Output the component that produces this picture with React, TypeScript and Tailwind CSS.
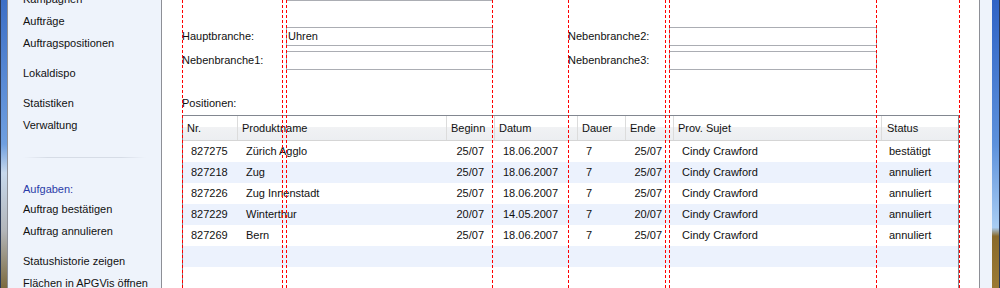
import React from 'react';

type Row = {
  nr: string;
  name: string;
  beginn: string;
  datum: string;
  dauer: string;
  ende: string;
  sujet: string;
  status: string;
};

const rows: Row[] = [
  { nr: '827275', name: 'Zürich Agglo', beginn: '25/07', datum: '18.06.2007', dauer: '7', ende: '25/07', sujet: 'Cindy Crawford', status: 'bestätigt' },
  { nr: '827218', name: 'Zug', beginn: '25/07', datum: '18.06.2007', dauer: '7', ende: '25/07', sujet: 'Cindy Crawford', status: 'annuliert' },
  { nr: '827226', name: 'Zug Innenstadt', beginn: '25/07', datum: '18.06.2007', dauer: '7', ende: '25/07', sujet: 'Cindy Crawford', status: 'annuliert' },
  { nr: '827229', name: 'Winterthur', beginn: '20/07', datum: '14.05.2007', dauer: '7', ende: '20/07', sujet: 'Cindy Crawford', status: 'annuliert' },
  { nr: '827269', name: 'Bern', beginn: '25/07', datum: '18.06.2007', dauer: '7', ende: '25/07', sujet: 'Cindy Crawford', status: 'annuliert' },
];

// red layout guides lying over the form
const guides = [182, 282, 286, 492, 568, 665, 669, 876, 959];

const SideItem: React.FC<{ label: string; className?: string }> = ({ label, className = '' }) => (
  <div className={`h-[22px] flex items-center ${className}`}>{label}</div>
);

const TextBox: React.FC<{ value?: string }> = ({ value }) => (
  <div className="h-[19px] border border-[#abadb3] bg-white flex items-center pl-[1px]">{value}</div>
);

const App: React.FC = () => {
  return (
    <div className="relative w-[1000px] h-[288px] overflow-hidden flex bg-white text-[11px] text-[#111] font-['Liberation_Sans',Arial,sans-serif]">
      {/* linker Fensterrahmen */}
      <div className="w-px bg-[#2c3a56]" />
      <div className="w-[6px] bg-[linear-gradient(to_bottom,#3d6fc6_0%,#6f9fe0_50%,#c7d8ec_60%,#b3b6ba_80%,#7c6a3e_100%)]" />
      <div className="w-px bg-[#8d8f96]" />

      {/* Seitenleiste */}
      <div className="w-[154px] bg-[#eef3fb] border-r border-[#8d8f96] pl-[15px] shrink-0">
        <SideItem label="Kampagnen" className="-mt-[12px]" />
        <SideItem label="Aufträge" />
        <SideItem label="Auftragspositionen" />
        <SideItem label="Lokaldispo" className="mt-[8px]" />
        <SideItem label="Statistiken" className="mt-[8px]" />
        <SideItem label="Verwaltung" />
        <div className="mt-[21px] mr-[15px] h-px bg-[linear-gradient(to_right,transparent,#d6dce6_20%,#d6dce6_80%,transparent)]" />
        <div className="mt-[22px] h-[18px] flex items-center text-[#2b3ca8]">Aufgaben:</div>
        <SideItem label="Auftrag bestätigen" />
        <SideItem label="Auftrag annulieren" />
        <SideItem label="Statushistorie zeigen" className="mt-[8px]" />
        <SideItem label="Flächen in APGVis öffnen" />
      </div>

      {/* Hauptbereich */}
      <div className="w-[818px] border-r border-[#8d8f96] pl-[20px] shrink-0">
        <div className="-mt-[18px] grid grid-cols-[104px_207px]">
          <div />
          <TextBox />
        </div>

        <div className="mt-[26px] grid grid-cols-[104px_207px_75px_101px_208px] items-center">
          <div>Hauptbranche:</div>
          <TextBox value="Uhren" />
          <div />
          <div>Nebenbranche2:</div>
          <TextBox />
        </div>
        <div className="mt-[5px] grid grid-cols-[104px_207px_75px_101px_208px] items-center">
          <div>Nebenbranche1:</div>
          <TextBox />
          <div />
          <div>Nebenbranche3:</div>
          <TextBox />
        </div>

        <div className="mt-[26px] h-[14px] leading-[14px]">Positionen:</div>

        {/* Tabelle */}
        <div className="mt-[5px] w-[777px] border-t border-x border-[#828790]">
          <div className="flex h-[25px] border-b border-[#d5d5d5] bg-[linear-gradient(to_bottom,#ffffff_0%,#ffffff_45%,#f1f2f4_46%,#eceef1_100%)]">
            <div className="w-[55px] pl-[4px] border-r border-[#dcdcdc] flex items-center">Nr.</div>
            <div className="w-[209px] pl-[4px] border-r border-[#dcdcdc] flex items-center">Produktname</div>
            <div className="w-[48px] pl-[4px] border-r border-[#dcdcdc] flex items-center">Beginn</div>
            <div className="w-[83px] pl-[4px] border-r border-[#dcdcdc] flex items-center">Datum</div>
            <div className="w-[48px] pl-[4px] border-r border-[#dcdcdc] flex items-center">Dauer</div>
            <div className="w-[48px] pl-[4px] border-r border-[#dcdcdc] flex items-center">Ende</div>
            <div className="w-[208px] pl-[4px] border-r border-[#dcdcdc] flex items-center">Prov. Sujet</div>
            <div className="flex-1 pl-[5px] flex items-center">Status</div>
          </div>

          {rows.map((r, i) => (
            <div key={r.nr} className={`flex h-[21px] items-center ${i % 2 === 1 ? 'bg-[#ecf2fd]' : 'bg-white'}`}>
              <div className="w-[55px] pl-[8px]">{r.nr}</div>
              <div className="w-[209px] pl-[8px]">{r.name}</div>
              <div className="w-[48px] pr-[11px] text-right">{r.beginn}</div>
              <div className="w-[83px] pl-[8px]">{r.datum}</div>
              <div className="w-[48px] pl-[8px]">{r.dauer}</div>
              <div className="w-[48px] pr-[12px] text-right">{r.ende}</div>
              <div className="w-[208px] pl-[8px]">{r.sujet}</div>
              <div className="flex-1 pl-[7px]">{r.status}</div>
            </div>
          ))}
          <div className="h-[21px] bg-[#ecf2fd]" />
          <div className="h-[21px] bg-white" />
        </div>
      </div>

      {/* rechter Rand */}
      <div className="w-[12px] bg-[#eef3fb]" />
      <div className="w-[7px] bg-[linear-gradient(to_bottom,#2f63c6_0%,#5d91dc_50%,#a9cdf3_79%,#8a6a2a_82%,#9b7a34_100%)]" />
      <div className="w-px bg-[#2c3a56]" />

      {guides.map((x) => (
        <div
          key={x}
          className="absolute top-0 bottom-0 w-px bg-[repeating-linear-gradient(to_bottom,#ff0000_0px,#ff0000_3px,transparent_3px,transparent_5px)]"
          style={{ left: x }}
        />
      ))}
    </div>
  );
};

export default App;
